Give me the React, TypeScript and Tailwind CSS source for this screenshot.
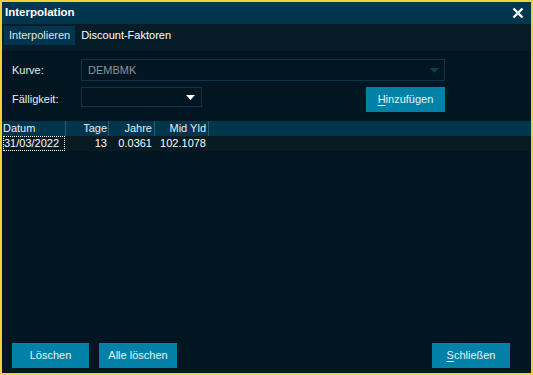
import { useState } from "react";

const font = { fontFamily: '"Liberation Sans", Arial, sans-serif' };

type Row = { datum: string; tage: string; jahre: string; mid: string };

const rows: Row[] = [
  { datum: "31/03/2022", tage: "13", jahre: "0.0361", mid: "102.1078" },
];

function Caret({ className }: { className?: string }) {
  return (
    <svg width="9" height="5" viewBox="0 0 9 5" className={className}>
      <path d="M0 0h9L4.5 5z" fill="currentColor" />
    </svg>
  );
}

function Button({ children, className }: { children: React.ReactNode; className?: string }) {
  return (
    <button
      className={`flex h-[25px] items-center justify-center bg-[#0180a8] text-[11px] text-[#e8f3f7] ${className ?? ""}`}
    >
      {children}
    </button>
  );
}

export default function App() {
  const [tab, setTab] = useState("interp");

  return (
    <div
      style={font}
      className="flex h-[375px] w-[533px] flex-col border-2 border-[#f4d03c] bg-[#011620] text-[11px] text-white"
    >
      {/* Titelleiste */}
      <div className="flex h-[22px] shrink-0 items-center justify-between bg-[#00354d] pl-[3px] pr-[7px]">
        <span className="text-[11.5px] font-bold">Interpolation</span>
        <svg width="12" height="12" viewBox="0 0 12 12">
          <path d="M1.5 1.5l9 9M10.5 1.5l-9 9" stroke="white" strokeWidth="2.4" />
        </svg>
      </div>

      {/* Tabs */}
      <div className="flex h-[27px] shrink-0 items-start gap-[2px] bg-[#061c27] pl-[2px] pt-[2px]">
        <button
          onClick={() => setTab("interp")}
          className={`h-[19px] px-[5px] text-[11px] ${tab === "interp" ? "bg-[#00354d] text-[#dbe7ec]" : "text-white"}`}
        >
          Interpolieren
        </button>
        <button
          onClick={() => setTab("discount")}
          className={`h-[19px] px-[4px] text-[11px] ${tab === "discount" ? "bg-[#00354d]" : "text-white"}`}
        >
          Discount-Faktoren
        </button>
      </div>

      <div className="flex flex-1 flex-col">
        {/* Formular */}
        <div className="flex flex-col pl-[10px] pr-[86px] pt-[8px]">
          <div className="flex items-center">
            <span className="w-[69px] text-[#e6eef1]">Kurve:</span>
            <div className="flex h-[22px] flex-1 items-center justify-between border border-[#0b3649] pl-[6px] pr-[5px]">
              <span className="text-[#8a959b]">DEMBMK</span>
              <Caret className="text-[#0d3b50]" />
            </div>
          </div>
          <div className="mt-[6px] flex items-start">
            <span className="mt-[4px] w-[69px] text-[#e6eef1]">Fälligkeit:</span>
            <div className="flex h-[20px] w-[121px] items-center justify-end border border-[#0b3649] pr-[6px]">
              <Caret className="text-white" />
            </div>
            <div className="flex-1" />
            <Button className="w-[79px]">
              <span className="underline underline-offset-2">H</span>inzufügen
            </Button>
          </div>
        </div>

        {/* Tabelle */}
        <div className="mt-[9px]">
          <div className="flex h-[15px] items-center bg-[#00354d] text-[#e6eef1]">
            <div className="w-[64px] border-r border-[#2c5a6e] pl-[1px] leading-[15px]">Datum</div>
            <div className="w-[43px] border-r border-[#2c5a6e] pr-[1px] text-right leading-[15px]">Tage</div>
            <div className="w-[46px] border-r border-[#2c5a6e] pr-[2px] text-right leading-[15px]">Jahre</div>
            <div className="w-[54px] border-r border-[#2c5a6e] pr-[2px] text-right leading-[15px]">Mid Yld</div>
          </div>
          {rows.map((r) => (
            <div key={r.datum} className="flex h-[15px] items-center bg-[#081a22] text-white">
              <div className="w-[64px] pl-[1px]">
                <span className="block w-[62px] border border-dotted border-white leading-[13px]">{r.datum}</span>
              </div>
              <div className="w-[43px] pr-[2px] text-right">{r.tage}</div>
              <div className="w-[46px] pr-[3px] text-right">{r.jahre}</div>
              <div className="w-[54px] pr-[3px] text-right">{r.mid}</div>
            </div>
          ))}
        </div>

        <div className="flex-1" />

        {/* Fußleiste */}
        <div className="flex items-center pb-[5px] pl-[10px] pr-[21px]">
          <Button className="w-[77px]">Löschen</Button>
          <Button className="ml-[10px] w-[78px]">Alle löschen</Button>
          <div className="flex-1" />
          <Button className="w-[78px]">
            <span className="underline underline-offset-2">S</span>chließen
          </Button>
        </div>
      </div>
    </div>
  );
}
